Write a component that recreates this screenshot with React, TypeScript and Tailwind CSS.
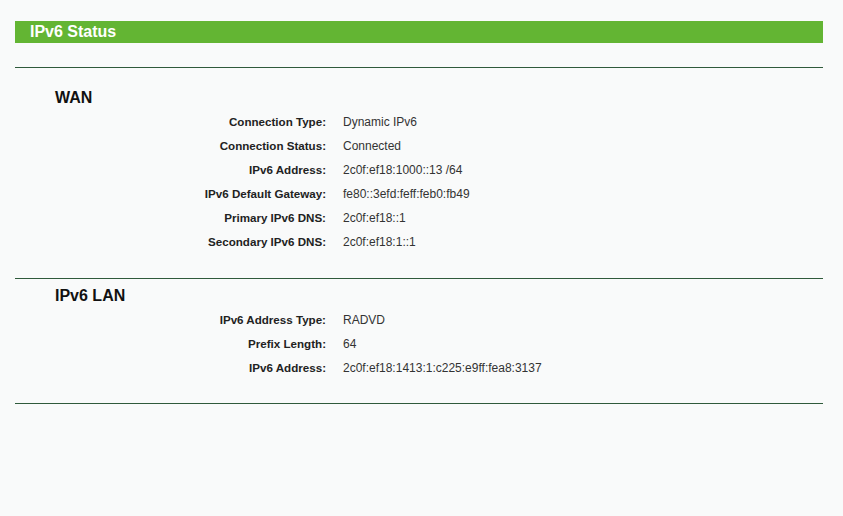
const WAN_ROWS: [string, string][] = [
  ['Connection Type:', 'Dynamic IPv6'],
  ['Connection Status:', 'Connected'],
  ['IPv6 Address:', '2c0f:ef18:1000::13 /64'],
  ['IPv6 Default Gateway:', 'fe80::3efd:feff:feb0:fb49'],
  ['Primary IPv6 DNS:', '2c0f:ef18::1'],
  ['Secondary IPv6 DNS:', '2c0f:ef18:1::1'],
];

const LAN_ROWS: [string, string][] = [
  ['IPv6 Address Type:', 'RADVD'],
  ['Prefix Length:', '64'],
  ['IPv6 Address:', '2c0f:ef18:1413:1:c225:e9ff:fea8:3137'],
];

function Rows({ rows }: { rows: [string, string][] }) {
  return (
    <div>
      {rows.map(([label, value]) => (
        <div key={label} className="flex h-[24px] items-center text-[12px]">
          <span className="w-[311px] text-right text-[11.6px] font-bold text-[#222]">{label}</span>
          <span className="pl-[17px] text-[#333]">{value}</span>
        </div>
      ))}
    </div>
  );
}

export default function App() {
  return (
    <div className="min-h-[516px] w-full bg-[#f9fafa] font-['Liberation_Sans',Arial,sans-serif]">
      <div className="ml-[15px] w-[808px] pt-[21px]">
        {/* Title bar */}
        <div className="flex h-[22px] items-center bg-[#63b533] pl-[15px] text-[16px] font-bold text-white">
          IPv6 Status
        </div>

        <div className="mt-[24px] h-px bg-[#2f5a3b]" />

        {/* WAN */}
        <div className="mt-[20px] flex h-[20px] items-center pl-[40px] text-[16px] font-bold text-[#111]">
          WAN
        </div>
        <div className="mt-[2px]">
          <Rows rows={WAN_ROWS} />
        </div>

        <div className="mt-[24px] h-px bg-[#2f5a3b]" />

        {/* IPv6 LAN */}
        <div className="mt-[7px] flex h-[20px] items-center pl-[40px] text-[16px] font-bold text-[#111]">
          IPv6 LAN
        </div>
        <div className="mt-[2px]">
          <Rows rows={LAN_ROWS} />
        </div>

        <div className="mt-[23px] h-px bg-[#2f5a3b]" />
      </div>
    </div>
  );
}
